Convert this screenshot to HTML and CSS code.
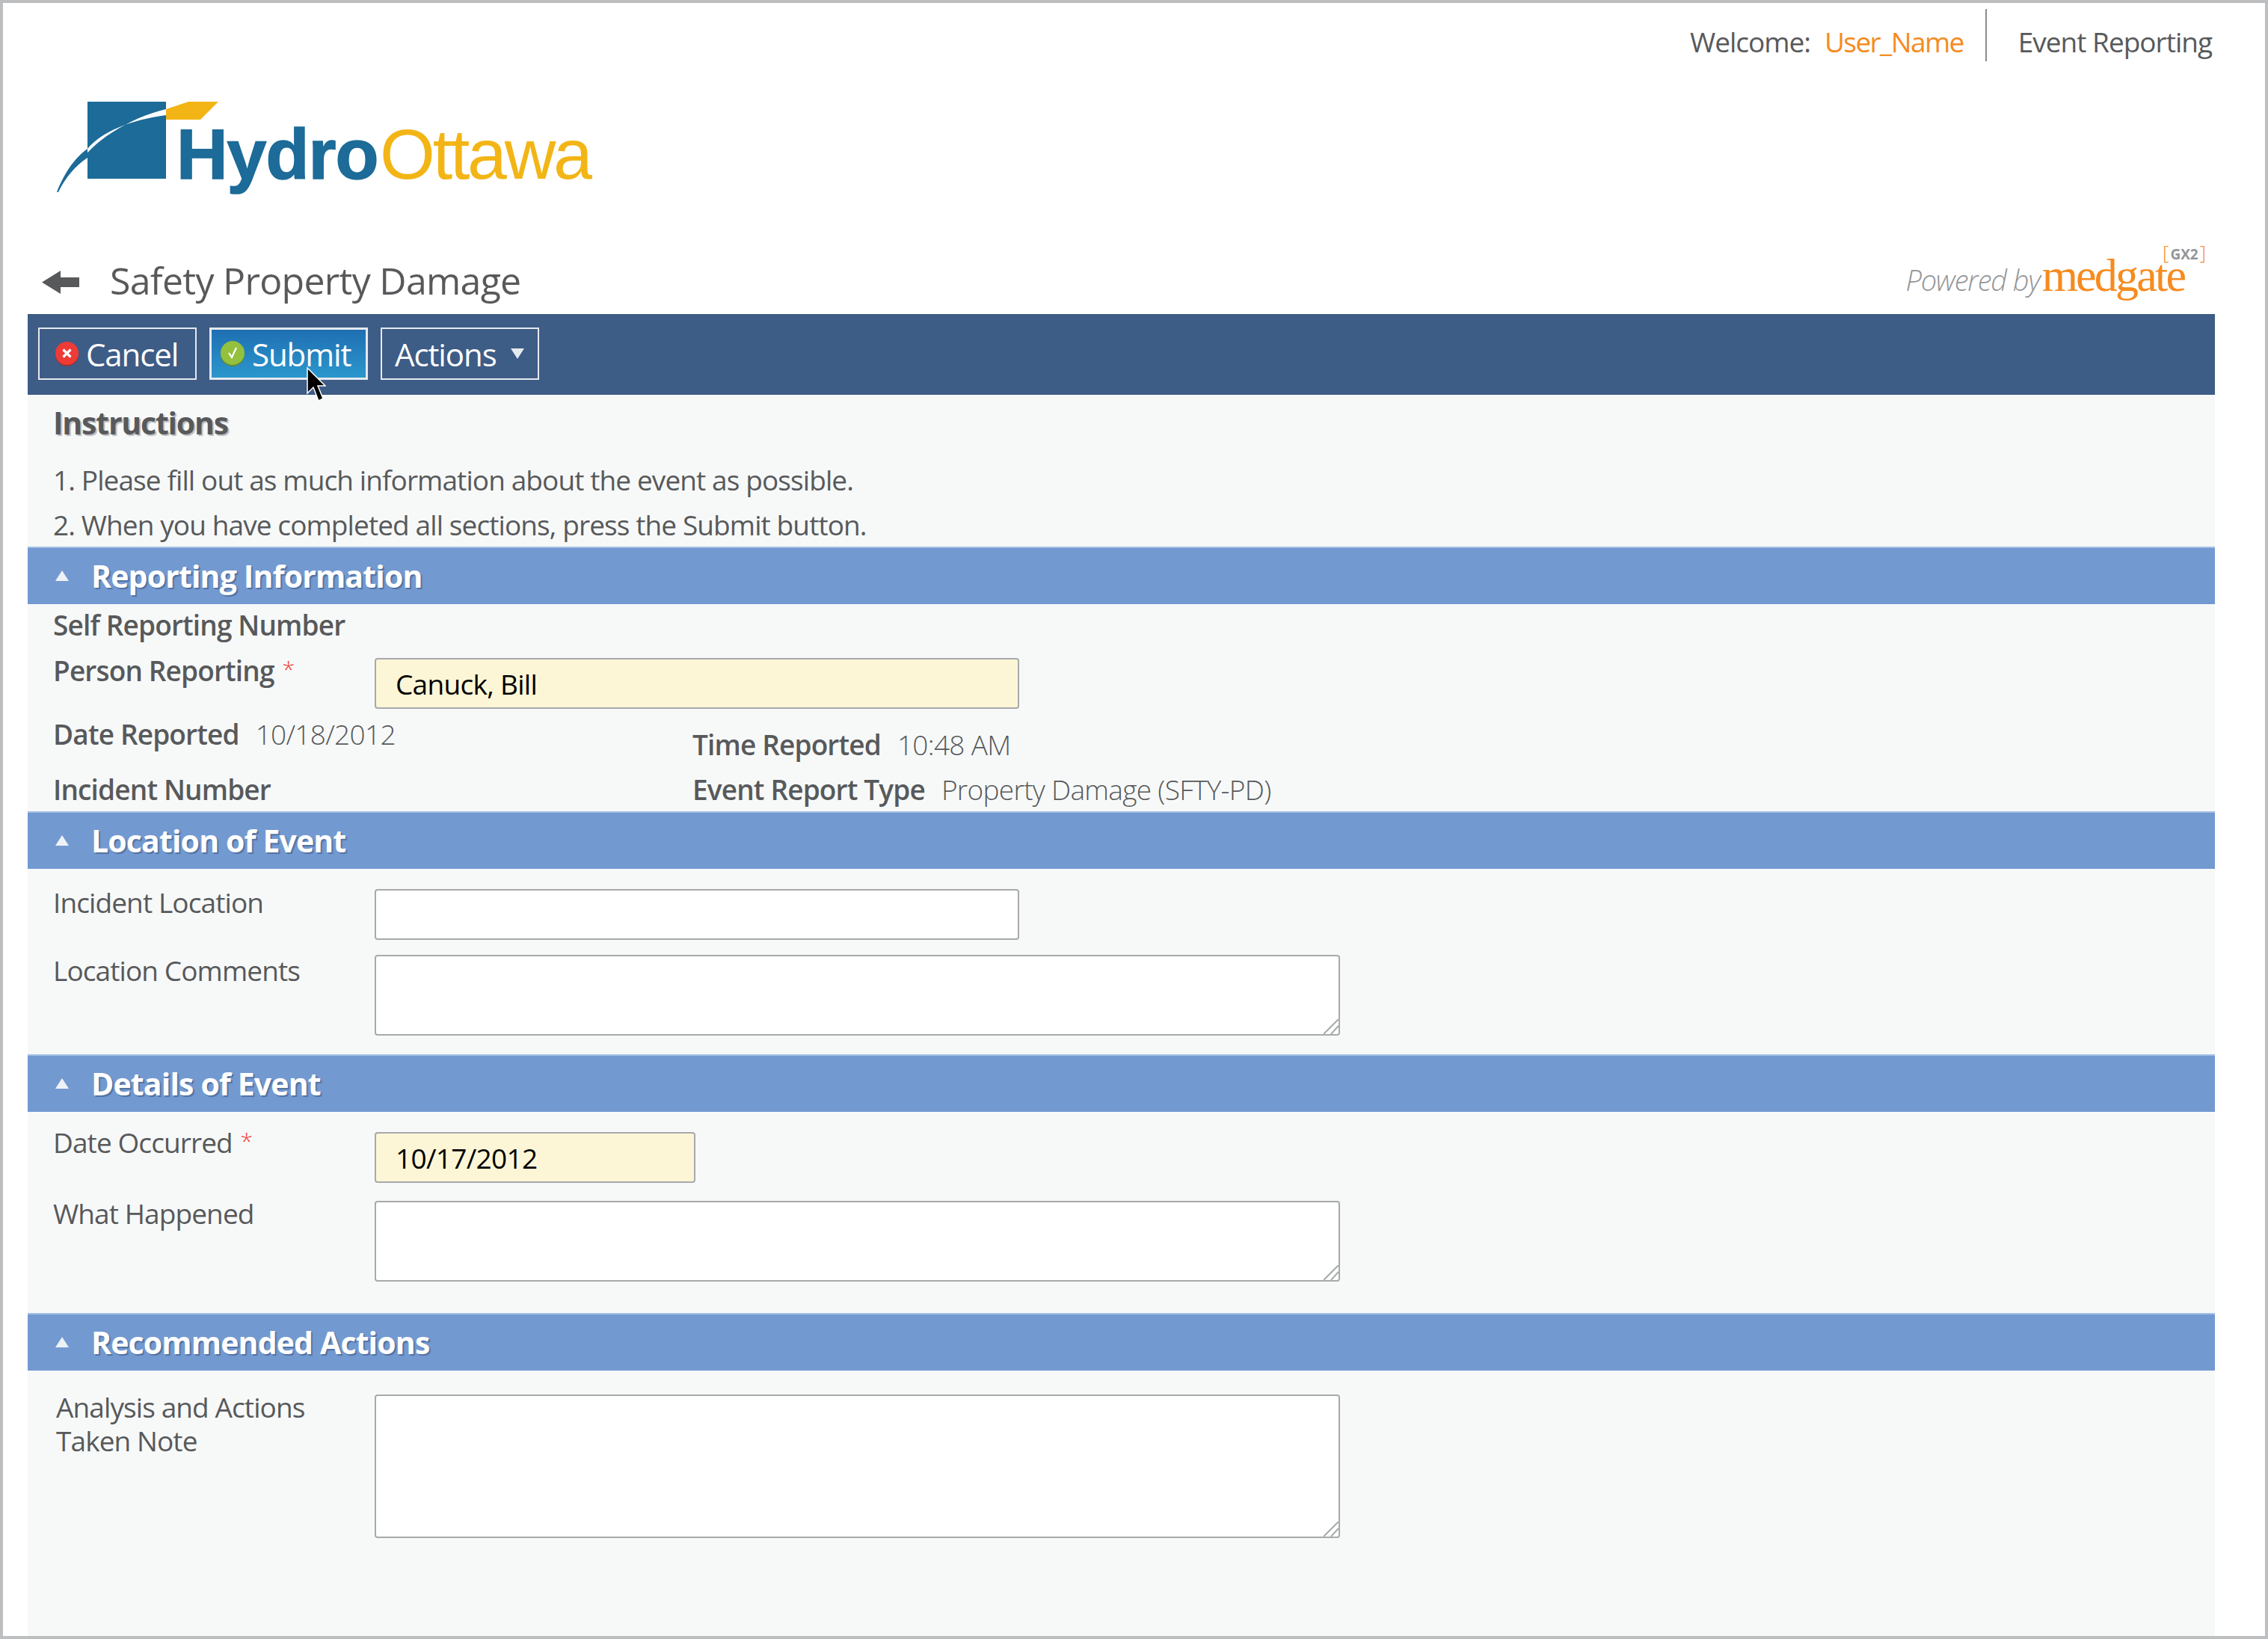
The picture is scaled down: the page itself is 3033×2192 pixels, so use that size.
FILE: index.html
```html
<!DOCTYPE html>
<html lang="en">
<head>
    <meta charset="UTF-8">
    <title>Safety Property Damage</title>
    <link rel="stylesheet" href="styles.css">
</head>
<body>
    <div class="page">
        <div class="topbar">
            <span class="top-text">Welcome:</span>
            <span class="top-text user-name">User_Name</span>
            <span class="divider"></span>
            <span class="top-text">Event Reporting</span>
        </div>

        <svg class="logo" width="716" height="128" viewBox="0 0 716 128">
            <path d="M41 0H146V103H41Z" fill="#1c6b98"/>
            <path d="M146 10C95 22 45 55 28 86C16 98 6 110 0 121C10 100 20 80 41 63C60 40 100 24 146 18Z" fill="#fff"/>
            <path d="M41 63C22 76 8 100 0 121L2 121C10 104 24 86 41 75Z" fill="#1c6b98"/>
            <path d="M146 10L176 0H216L192 24H146Z" fill="#f3b516"/>
            <text class="logo-hydro" x="160" y="103">Hydro</text>
            <text class="logo-ottawa" x="432" y="103">Ottawa</text>
        </svg>

        <div class="content">
            <div class="title-row">
                <svg class="back-arrow" width="50" height="31" viewBox="0 0 50 31">
                    <path d="M0 15.5L25 0V9H50V22H25V31Z" fill="#58595b"/>
                </svg>
                <h1>Safety Property Damage</h1>
                <div class="powered">
                    <span class="powered-by">Powered by</span>
                    <span class="medgate">medgate</span>
                    <span class="gx2">[<b>GX2</b>]</span>
                </div>
            </div>

            <div class="toolbar">
                <button type="button" class="btn">
                    <svg width="31" height="33" viewBox="0 0 31 33">
                        <circle cx="15.5" cy="17" r="15.5" fill="#a92a2a"/>
                        <circle cx="15.5" cy="15.5" r="15.5" fill="#ee3b36"/>
                        <path d="M10.5 10.5L20.5 20.5M20.5 10.5L10.5 20.5" stroke="#fff" stroke-width="3.2"/>
                    </svg>
                    Cancel
                </button>
                <button type="button" class="btn btn-active">
                    <svg width="32" height="34" viewBox="0 0 32 34">
                        <circle cx="16" cy="18" r="16" fill="#5f8a3a"/>
                        <circle cx="16" cy="16" r="16" fill="#93c03d"/>
                        <path d="M11 16L15 22L21 9" stroke="#fff" stroke-width="2.2" fill="none"/>
                    </svg>
                    Submit
                    <svg class="cursor" width="26" height="46" viewBox="0 0 26 46">
                        <path d="M1 1V35L9 27L16 45L22 42L15 25H25Z" fill="#000" stroke="#fff" stroke-width="1.5"/>
                    </svg>
                </button>
                <button type="button" class="btn btn-actions">
                    Actions
                    <span class="caret"></span>
                </button>
            </div>

            <div class="panel">
                <div class="instructions">
                    <h2>Instructions</h2>
                    <p>1. Please fill out as much information about the event as possible.</p>
                    <p>2. When you have completed all sections, press the Submit button.</p>
                </div>

                <div class="section-head"><span class="tri"></span>Reporting Information</div>
                <div class="section-body reporting">
                    <div class="strong line">Self Reporting Number</div>
                    <div class="field person">
                        <label class="strong">Person Reporting <i>*</i></label>
                        <input class="input required" type="text" value="Canuck, Bill">
                    </div>
                    <div class="pair date-pair">
                        <div class="line"><span class="strong">Date Reported</span><span class="value">10/18/2012</span></div>
                        <div class="line time"><span class="strong">Time Reported</span><span class="value">10:48 AM</span></div>
                    </div>
                    <div class="pair type-pair">
                        <div class="line"><span class="strong">Incident Number</span></div>
                        <div class="line"><span class="strong">Event Report Type</span><span class="value">Property Damage (SFTY-PD)</span></div>
                    </div>
                </div>

                <div class="section-head"><span class="tri"></span>Location of Event</div>
                <div class="section-body location">
                    <div class="field">
                        <label>Incident Location</label>
                        <input class="input" type="text">
                    </div>
                    <div class="field comments">
                        <label>Location Comments</label>
                        <div class="area-wrap">
                            <textarea class="area"></textarea>
                            <svg class="grip" width="20" height="20" viewBox="0 0 20 20"><path d="M0 20L20 0M10 20L20 9" stroke="#a7a9ac" stroke-width="2"/></svg>
                        </div>
                    </div>
                </div>

                <div class="section-head"><span class="tri"></span>Details of Event</div>
                <div class="section-body details">
                    <div class="field occurred">
                        <label>Date Occurred <i>*</i></label>
                        <input class="input input-short required" type="text" value="10/17/2012">
                    </div>
                    <div class="field happened">
                        <label>What Happened</label>
                        <div class="area-wrap">
                            <textarea class="area"></textarea>
                            <svg class="grip" width="20" height="20" viewBox="0 0 20 20"><path d="M0 20L20 0M10 20L20 9" stroke="#a7a9ac" stroke-width="2"/></svg>
                        </div>
                    </div>
                </div>

                <div class="section-head"><span class="tri"></span>Recommended Actions</div>
                <div class="section-body recommended">
                    <div class="field analysis">
                        <label>Analysis and Actions<br>Taken Note</label>
                        <div class="area-wrap">
                            <textarea class="area area-tall"></textarea>
                            <svg class="grip" width="20" height="20" viewBox="0 0 20 20"><path d="M0 20L20 0M10 20L20 9" stroke="#a7a9ac" stroke-width="2"/></svg>
                        </div>
                    </div>
                </div>
            </div>
        </div>
    </div>
</body>
</html>
```

FILE: styles.css
```css
* { box-sizing: border-box; }
body {
    margin: 0;
    font-family: "Open Sans", sans-serif;
    color: #58595b;
    background: #fff;
}
.page {
    width: 3033px;
    height: 2192px;
    border: 4px solid #bcbec0;
    overflow: hidden;
}

/* top strip */
.topbar {
    display: flex;
    justify-content: flex-end;
    align-items: center;
    height: 70px;
    margin-top: 8px;
    padding-right: 71px;
    font-size: 37px;
    letter-spacing: -1px;
}
.top-text { padding-top: 16px; }
.user-name { color: #f68b1f; margin-left: 19px; letter-spacing: -1.6px; }
.divider {
    width: 2px;
    height: 70px;
    background: #8a8c8e;
    margin: 0 42px 0 29px;
}
.logo {
    display: block;
    margin: 54px 0 0 72px;
}
.logo-hydro { font: bold 95px "Liberation Sans", sans-serif; fill: #1c6b98; stroke: #1c6b98; stroke-width: 1.5px; letter-spacing: -1px; }
.logo-ottawa { font: 95px "Liberation Sans", sans-serif; fill: #f3b516; letter-spacing: -3.2px; }

.content { margin: 0 67px 0 33px; }
.title-row {
    display: flex;
    align-items: center;
    height: 90px;
    margin-top: 66px;
    padding-left: 19px;
}
.back-arrow { margin: 4px 41px 0 0; }
h1 {
    margin: 0;
    font-size: 50px;
    font-weight: 400;
    letter-spacing: -0.7px;
    flex: 1;
}
.powered {
    display: flex;
    align-items: baseline;
    height: 90px;
    padding: 10px 12px 0 0;
}
.powered-by {
    font-size: 38px;
    font-style: italic;
    font-weight: 300;
    letter-spacing: -1.1px;
    color: #939598;
    margin: 8px 3px 0 0;
}
.medgate {
    font-family: "Liberation Serif", serif;
    font-size: 62px;
    letter-spacing: -2.8px;
    color: #f68b1f;
    line-height: 20px;
}
.gx2 {
    align-self: flex-start;
    margin: -14px 0 0 -29px;
    font-size: 26px;
    font-weight: 300;
    line-height: 22px;
    letter-spacing: 0;
    color: #f68b1f;
}
.gx2 b {
    margin: 0 2px;
    font-size: 19px;
    font-weight: 700;
    color: #939598;
}

/* toolbar */
.toolbar {
    display: flex;
    gap: 17px;
    height: 108px;
    padding: 18px 14px;
    background: #3d5c86;
}
.btn {
    position: relative;
    display: flex;
    align-items: center;
    gap: 10px;
    width: 212px;
    height: 70px;
    padding: 0 0 0 21px;
    border: 2px solid #e6e9ee;
    background: transparent;
    color: #fff;
    font: 42px "Open Sans", sans-serif;
    letter-spacing: -1.1px;
}
.btn-active {
    padding-left: 12px;
    border-width: 3px;
    background: linear-gradient(#1f6fb2, #2b97cd);
}
.btn-actions { padding-left: 17px; gap: 19px; }
.caret {
    width: 0;
    height: 0;
    border-left: 9px solid transparent;
    border-right: 9px solid transparent;
    border-top: 14px solid #e6e9ee;
}
.cursor {
    position: absolute;
    left: 127px;
    top: 50px;
}

/* form */
.panel {
    height: 1758px;
    background: #f7f9f9;
    font-size: 37px;
    letter-spacing: -0.9px;
}
.instructions {
    height: 203px;
    padding: 10px 0 0 34px;
}
.instructions h2 {
    margin: 0 0 20px;
    font-size: 41px;
    line-height: 54px;
    font-weight: 700;
    letter-spacing: -1.2px;
    text-shadow: 2px 2px 1px #b9bbbd;
}
.instructions p {
    margin: 0;
    line-height: 60px;
}
.section-head {
    display: flex;
    align-items: center;
    height: 77px;
    padding: 0 0 2px 37px;
    border-top: 2px solid #a5c0e6;
    background: #7399d1;
    color: #fff;
    font-size: 41px;
    font-weight: 700;
    letter-spacing: -0.85px;
    text-shadow: 2px 2px 1px #52719f;
}
.tri {
    width: 0;
    height: 0;
    margin-right: 30px;
    border-left: 9px solid transparent;
    border-right: 9px solid transparent;
    border-bottom: 14px solid #eef1f6;
}
.section-body { padding-left: 34px; }
.line { line-height: 54px; }
.strong { font-weight: 600; letter-spacing: -0.85px; }
.value { font-weight: 300; margin-left: 22px; letter-spacing: -0.7px; }
.field {
    display: flex;
    align-items: flex-start;
}
.field label {
    flex: 0 0 430px;
    line-height: 54px;
}
.field i {
    position: relative;
    top: -5px;
    color: #ee3b36;
    font-size: 30px;
    font-style: normal;
    font-weight: 300;
    margin-left: 2px;
}
.input, .area {
    display: block;
    border: 2px solid #a7a9ac;
    border-radius: 4px;
    background: #fff;
    font: 37px "Open Sans", sans-serif;
    letter-spacing: -0.7px;
    color: #000;
}
.input {
    width: 862px;
    height: 68px;
    padding: 0 0 0 26px;
}
.input-short { width: 429px; }
.required { background: #fdf6d6; }
.area-wrap { position: relative; }
.area {
    width: 1291px;
    height: 108px;
    resize: none;
}
.area-tall { height: 192px; }
.grip {
    position: absolute;
    right: 2px;
    bottom: 2px;
}
.pair {
    display: grid;
    grid-template-columns: 855px 1fr;
}

.reporting { height: 277px; padding-top: 1px; }
.person { margin-top: 7px; }
.person .input { margin-top: 10px; }
.date-pair { margin-top: 7px; }
.time { margin-top: 14px; }
.type-pair { margin-top: 6px; }

.location { height: 248px; padding-top: 18px; }
.location .input { margin-top: 9px; }
.comments { margin-top: 14px; }
.comments .area-wrap { margin-top: 6px; }

.details { height: 269px; padding-top: 14px; }
.occurred .input { margin-top: 13px; }
.happened { margin-top: 14px; }
.happened .area-wrap { margin-top: 10px; }

.recommended { padding-top: 26px; }
.analysis label { line-height: 45px; padding-left: 4px; }
.analysis .area-wrap { margin-top: 6px; }
```
